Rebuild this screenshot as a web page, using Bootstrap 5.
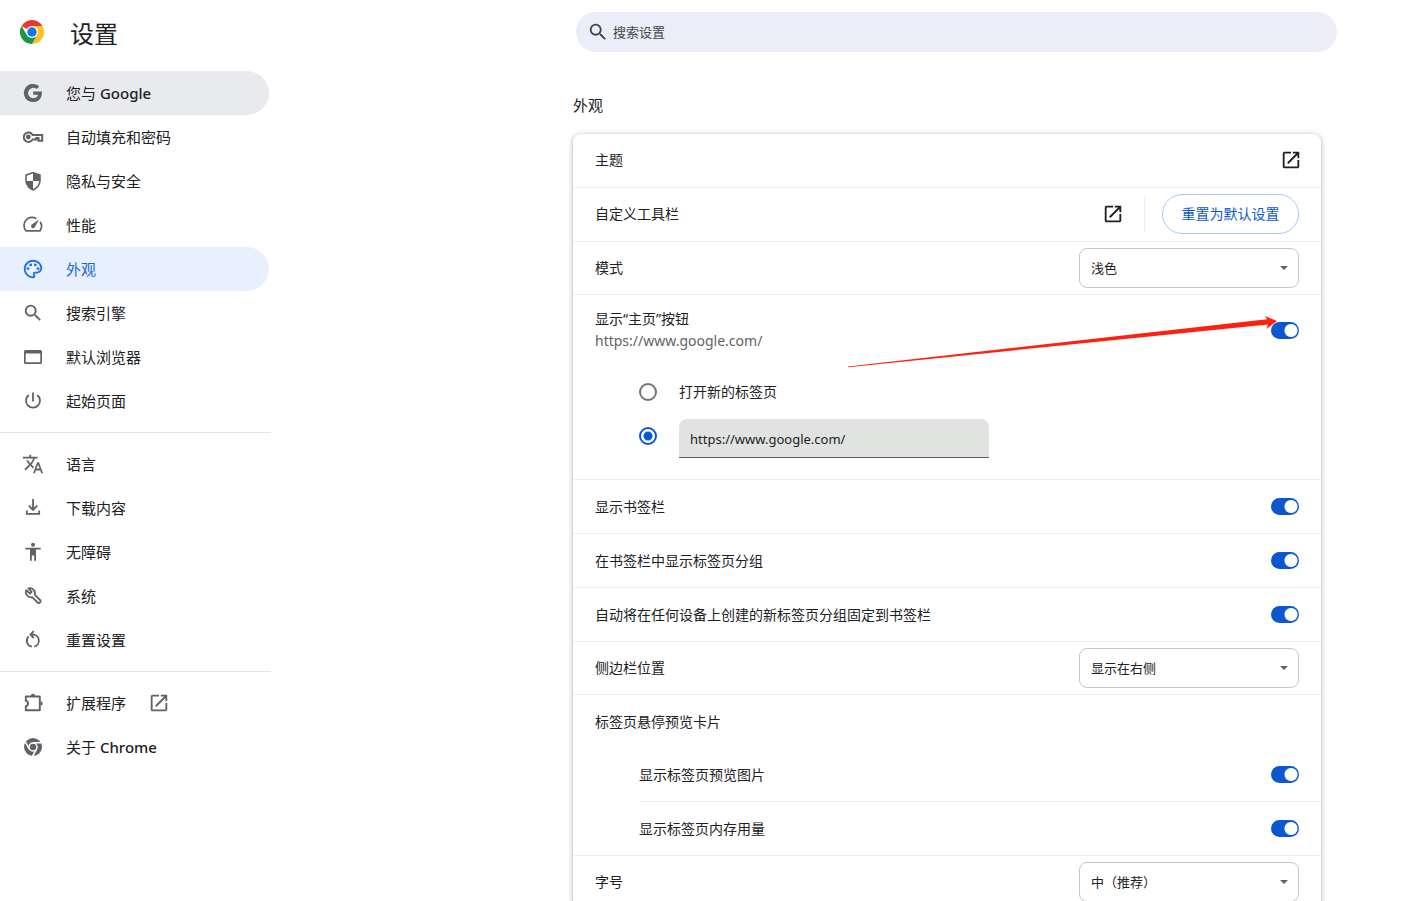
<!DOCTYPE html>
<html lang="zh-CN">
<head>
<meta charset="utf-8">
<meta name="viewport" content="width=device-width, initial-scale=1">
<title>设置 - 外观</title>
<link href="https://cdn.jsdelivr.net/npm/bootstrap@5.3.0/dist/css/bootstrap.min.css" rel="stylesheet">
<style>
:root{--ink:#202124;--muted:#5f6368;--blue:#0b57d0;--line:#ececec}
body{font-family:"Noto Sans","Noto Sans CJK SC",sans-serif;font-size:14px;line-height:20px;color:var(--ink);background:#fff}
.top-bar{height:64px}
.side{width:271px}
.app-title{font-size:24px;line-height:32px;font-weight:400;padding-top:4px}
.brand{padding-left:20px;gap:26px}
.searchbox{width:761px;height:40px;border-radius:20px;background:#ebeef8;margin-right:81px;padding:0 11px;gap:4px}
.searchbox .ico{color:#444746}
.searchbox input{font-size:13px;color:#444746;background:transparent;outline:0}
.searchbox input::placeholder{color:#444746;opacity:1}
.menu{padding-top:7px}
.menu .nav-link{height:44px;padding:0 22px;gap:22px;margin-right:2px;border-radius:0 22px 22px 0;color:var(--ink);font-size:15px;font-weight:400}
.menu .nav-link:hover,.menu .nav-link.hovered{background:#e8eaed}
.menu .nav-link.active{background:#e8f0fe;color:#1967d2}
.menu .nav-link.active svg{color:#1a73e8}
.menu svg{color:var(--muted)}
.menu hr{margin:9px 0;border-color:#e4e4e4;opacity:1}
.ico{width:22px;height:22px;flex:none;fill:currentColor}
.ico .ln{fill:none;stroke:currentColor;stroke-width:2}
.content{overflow-y:auto;scrollbar-width:none}
.panel-wrap{width:100%;max-width:748px;margin-left:auto;margin-right:97px}
.page-head{font-size:15px;line-height:24px;padding-top:29px;margin-bottom:17px;font-weight:400}
.panel{border-radius:8px;box-shadow:0 1px 2px rgba(60,64,67,.3),0 1px 4px 2px rgba(60,64,67,.18)}
.line{min-height:54px;padding:0 22px;border-top:1px solid var(--line)}
.line-action{padding-bottom:2px}
.line-pick{min-height:53px}
.line:first-child{border-top:0;min-height:53px}
.home-group{border-top:1px solid var(--line);padding-bottom:21px}
.home-group .line{border-top:0;min-height:75px;padding-bottom:5px;line-height:22px}
.sub-url{color:#5f6368}
.option{height:44px;padding-left:66px;gap:22px}
.sub-lines{margin-left:66px}
.sub-lines .line{padding-left:0}
.form-switch.sw{padding:0;margin:0;min-height:0;display:flex}
.sw .form-check-input,.sw .form-check-input:focus{width:28px;height:17px;margin:0;float:none;border:0;border-radius:9px;background:#bbb radial-gradient(circle at 8px center,#fff 6px,transparent 7px)}
.sw .form-check-input:checked{background:var(--blue) radial-gradient(circle at 20px center,#fff 6px,transparent 7px)}
.option .form-check-input{width:18px;height:18px;margin:0;border:2px solid #757575;background-image:none;background-color:#fff;box-shadow:none}
.option .form-check-input:checked{border-color:var(--blue);background:#fff radial-gradient(circle at center,var(--blue) 4px,#fff 5px) padding-box}
.url-input{width:310px;height:39px;border:0;border-bottom:1px solid #5f6368;border-radius:8px 8px 0 0;background:#e1e3e1;padding:1px 11px 0;font-size:13px;color:var(--ink);align-self:flex-end}
.pick{width:220px;height:40px;font-size:13px;color:var(--ink);border:1px solid #c4c7c5;border-radius:8px;padding:1px 30px 0 11px;background-image:url("data:image/svg+xml,%3Csvg xmlns='http://www.w3.org/2000/svg' viewBox='0 0 8 4'%3E%3Cpath d='M0 0h8L4 4z' fill='%235f6368'/%3E%3C/svg%3E");background-size:8px 4px;background-position:right 10px center}
.reset-btn{width:137px;height:40px;border:1px solid #a8c7fa;border-radius:20px;color:var(--blue);font-size:14px;padding:0}
.v-rule{width:1px;height:34px;background:var(--line);margin:0 17px 0 20px}
.open-btn{border:0;background:transparent;padding:0;display:flex;color:var(--ink)}
.open-btn.edge{margin-right:-3px}
.pointer-arrow{position:absolute;right:41px;top:19px;width:432px;height:54px;pointer-events:none}
</style>
</head>
<body>
<svg class="d-none" aria-hidden="true">
  <symbol id="i-open" viewBox="0 0 24 24"><path d="M19 19H5V5h7V3H5a2 2 0 0 0-2 2v14a2 2 0 0 0 2 2h14c1.100 0 2-.9 2-2v-7h-2v7zM14 3v2h3.590l-9.830 9.830 1.410 1.410L19 6.410V10h2V3h-7z"/></symbol>
  <symbol id="i-search" viewBox="0 0 24 24"><path d="M15.500 14h-.79l-.28-.27A6.471 6.471 0 0 0 16 9.500 6.500 6.500 0 1 0 9.500 16c1.610 0 3.090-.59 4.230-1.570l.27.28v.79l5 4.990L20.490 19l-4.990-5zm-6 0C7.010 14 5 11.990 5 9.500S7.010 5 9.500 5 14 7.010 14 9.500 11.990 14 9.500 14z"/></symbol>
</svg>
<div class="vh-100 overflow-hidden d-flex flex-column">
  <header class="top-bar d-flex align-items-center justify-content-between flex-shrink-0">
    <div class="brand side d-flex align-items-center flex-shrink-0">
      <svg width="24" height="24" viewBox="0 0 48 48" aria-hidden="true">
        <path fill="#e33b2e" d="M24 24 3.200 12A24 24 0 0 1 44.800 12z"/>
        <path fill="#fcc31e" d="M24 12h20.800A24 24 0 0 1 24 48l10.400-18z"/>
        <path fill="#1e9446" d="M3.200 12A24 24 0 0 0 24 48l10.400-18L24 24 13.600 30z"/>
        <circle cx="24" cy="24" r="12" fill="#fff"/><circle cx="24" cy="24" r="9.500" fill="#1a73e8"/>
      </svg>
      <h1 class="app-title mb-0">设置</h1>
    </div>
    <label class="searchbox d-flex align-items-center">
      <svg class="ico" aria-hidden="true"><use href="#i-search"/></svg>
      <input type="search" class="border-0 p-0 flex-grow-1" placeholder="搜索设置" aria-label="搜索设置">
    </label>
  </header>
  <div class="d-flex flex-grow-1 overflow-hidden">
    <nav class="side menu nav flex-column flex-nowrap flex-shrink-0" aria-label="设置">
      <a href="#" class="nav-link hovered d-flex align-items-center"><svg class="ico" viewBox="0 0 22 22"><path d="M19.900 9.400h-8.700v3.400h4.800c-.5 2-2.300 3.400-4.700 3.400a5.200 5.200 0 1 1 3.400-9.100l2.600-2.600A9.100 9.100 0 1 0 11.100 20.100c5.200 0 9.300-3.700 8.800-10.700z"/></svg><span>您与 <span class="fw-medium">Google</span></span></a>
      <a href="#" class="nav-link d-flex align-items-center"><svg class="ico" viewBox="0 0 22 22"><path class="ln" d="M10.600 9H20.200v5.700h-3.700v-2.700h-2.200v1.400h-3.700A4.700 4.700 0 1 1 10.600 9z"/><circle cx="6.300" cy="11" r="2.400"/></svg>自动填充和密码</a>
      <a href="#" class="nav-link d-flex align-items-center"><svg class="ico" viewBox="0 0 24 24"><path d="M12 2 3.500 5v6c0 5.300 3.600 10 8.500 11.500 4.900-1.500 8.500-6.200 8.500-11.500V5zm0 10h6.800c-.5 3.900-3.200 7.400-6.800 8.600V12H5.200V6.200L12 3.900z"/></svg>隐私与安全</a>
      <a href="#" class="nav-link d-flex align-items-center"><svg class="ico" viewBox="0 0 22 22"><path class="ln" style="stroke-width:1.700" d="M14.400 4.600A8.100 8.100 0 0 0 4 16.800h14a8.100 8.100 0 0 0 .2-9"/><path d="m17 5.500-4.400 8a2.100 2.100 0 0 1-3.200-2.700z"/></svg>性能</a>
      <a href="#" class="nav-link active d-flex align-items-center" aria-current="page"><svg class="ico" viewBox="0 0 24 24"><path d="M12 22C6.490 22 2 17.510 2 12S6.490 2 12 2s10 4.040 10 9c0 3.310-2.690 6-6 6h-1.770c-.28 0-.5.22-.5.5 0 .12.050.23.130.33.410.47.640 1.060.640 1.670A2.500 2.500 0 0 1 12 22zm0-18c-4.410 0-8 3.590-8 8s3.590 8 8 8c.28 0 .5-.22.5-.5a.54.540 0 0 0-.14-.35c-.41-.46-.63-1.050-.63-1.650a2.500 2.500 0 0 1 2.500-2.500H16c2.210 0 4-1.790 4-4 0-3.860-3.590-7-8-7z"/><circle cx="6.500" cy="11.500" r="1.500"/><circle cx="9.500" cy="7.500" r="1.500"/><circle cx="14.500" cy="7.500" r="1.500"/><circle cx="17.500" cy="11.500" r="1.500"/></svg>外观</a>
      <a href="#" class="nav-link d-flex align-items-center"><svg class="ico"><use href="#i-search"/></svg>搜索引擎</a>
      <a href="#" class="nav-link d-flex align-items-center"><svg class="ico" viewBox="0 0 22 22"><path fill-rule="evenodd" d="M3.500 4h15A1.500 1.500 0 0 1 20 5.500v11a1.500 1.500 0 0 1-1.500 1.500h-15A1.500 1.500 0 0 1 2 16.500v-11A1.500 1.500 0 0 1 3.500 4zm.2 3.500v8.800h14.600V7.500z"/></svg>默认浏览器</a>
      <a href="#" class="nav-link d-flex align-items-center"><svg class="ico" viewBox="0 0 22 22"><path class="ln" style="stroke-width:1.800" d="M11 2.500v9M6.800 5a7 7 0 1 0 8.400 0"/></svg>起始页面</a>
      <hr>
      <a href="#" class="nav-link d-flex align-items-center"><svg class="ico" viewBox="0 0 24 24"><path d="m12.870 15.070-2.540-2.510.03-.03A17.520 17.520 0 0 0 14.070 6H17V4h-7V2H8v2H1v1.990h11.170C11.500 7.920 10.440 9.750 9 11.350 8.070 10.320 7.300 9.190 6.690 8h-2c.73 1.630 1.730 3.170 2.980 4.560l-5.090 5.020L4 19l5-5 3.110 3.110.76-2.040zM18.500 10h-2L12 22h2l1.120-3h4.750L21 22h2l-4.500-12zm-2.620 7 1.620-4.330L19.120 17h-3.240z"/></svg>语言</a>
      <a href="#" class="nav-link d-flex align-items-center"><svg class="ico" viewBox="0 0 22 22"><path class="ln" style="stroke-width:1.800" d="M11 2v10.500M6.800 8.700l4.200 4.200 4.200-4.200M4.800 13.500v3.300h12.400v-3.300"/></svg>下载内容</a>
      <a href="#" class="nav-link d-flex align-items-center"><svg class="ico" viewBox="0 0 22 22"><circle cx="11" cy="3.800" r="2"/><path d="M3.300 6.800h15.400v1.800H14v11.200h-1.800v-5.300H9.800v5.300H8V8.600H3.300z"/></svg>无障碍</a>
      <a href="#" class="nav-link d-flex align-items-center"><svg class="ico" viewBox="0 0 22 22"><path class="ln" style="stroke-width:1.800;stroke-linejoin:round" d="m4.400 5.200 3.500 3.500 1.900-1.900-3.400-3.400a5 5 0 0 1 6.300 6.300l5.300 5.300a1.600 1.600 0 0 1-2.400 2.500l-5.400-5.400A5 5 0 0 1 4.400 5.200z"/></svg>系统</a>
      <a href="#" class="nav-link d-flex align-items-center"><svg class="ico" viewBox="0 0 22 22"><path class="ln" style="stroke-width:1.800" d="M6.600 7.400a6 6 0 0 0 3.200 10.200M9 5.600h2a6.100 6.100 0 0 1 1.300 12M11.800 2.200 8.400 5.600l3.400 3.400"/></svg>重置设置</a>
      <hr>
      <a href="#" class="nav-link d-flex align-items-center"><svg class="ico" viewBox="0 0 22 22"><path class="ln" style="stroke-width:1.900;stroke-linejoin:round" d="M3.800 4.500h14v13.800h-14v-4.100c3-.6 3-4.800 0-5.400z"/><path d="M8.800 4a2.200 2.200 0 0 1 4.400 0zM18.500 9.200a2.200 2.200 0 0 1 0 4.400z"/></svg>扩展程序<svg class="ico"><use href="#i-open"/></svg></a>
      <a href="#" class="nav-link d-flex align-items-center"><svg class="ico" viewBox="0 0 22 22"><circle cx="11" cy="11" r="9"/><circle cx="11" cy="11" r="4" fill="none" stroke="#fff" stroke-width="1.500"/><path d="M11 6.800h8M7.400 13.100 3.400 6.200M14.600 13.100l-4 6.900" fill="none" stroke="#fff" stroke-width="1.500"/></svg><span>关于 <span class="fw-medium">Chrome</span></span></a>
    </nav>
    <main class="content flex-grow-1 d-flex">
      <div class="panel-wrap">
        <h2 class="page-head">外观</h2>
        <section class="panel bg-white">
          <div class="line line-action d-flex align-items-center justify-content-between"><span>主题</span>
            <button class="open-btn edge" aria-label="主题"><svg class="ico"><use href="#i-open"/></svg></button></div>
          <div class="line line-action d-flex align-items-center"><span class="me-auto">自定义工具栏</span>
            <button class="open-btn" aria-label="自定义工具栏"><svg class="ico"><use href="#i-open"/></svg></button>
            <span class="v-rule"></span>
            <button class="btn reset-btn">重置为默认设置</button></div>
          <div class="line line-pick d-flex align-items-center justify-content-between"><label for="mode">模式</label>
            <select id="mode" class="form-select pick"><option>浅色</option></select></div>
          <div class="home-group position-relative">
            <div class="line d-flex align-items-center justify-content-between">
              <label for="home"><span class="d-block">显示“主页”按钮</span><span class="sub-url d-block">https://www.google.com/</span></label>
              <div class="form-check form-switch sw"><input id="home" class="form-check-input" type="checkbox" role="switch" checked></div>
            </div>
            <div class="option d-flex align-items-center"><input class="form-check-input" type="radio" name="homepage" id="newtab"><label for="newtab">打开新的标签页</label></div>
            <div class="option d-flex align-items-center"><input class="form-check-input" type="radio" name="homepage" aria-label="自定义网址" checked><input class="url-input" type="text" value="https://www.google.com/" aria-label="网址"></div>
            <svg class="pointer-arrow" viewBox="0 0 432 54" aria-hidden="true"><path fill="#ff2010" d="M0 52.500 419 5.300 417 2l12 5-10.500 8 1.500-4.500L0 53.200z"/></svg>
          </div>
          <div class="line d-flex align-items-center justify-content-between"><label for="bar">显示书签栏</label>
            <div class="form-check form-switch sw"><input id="bar" class="form-check-input" type="checkbox" role="switch" checked></div></div>
          <div class="line d-flex align-items-center justify-content-between"><label for="groups">在书签栏中显示标签页分组</label>
            <div class="form-check form-switch sw"><input id="groups" class="form-check-input" type="checkbox" role="switch" checked></div></div>
          <div class="line d-flex align-items-center justify-content-between"><label for="pin">自动将在任何设备上创建的新标签页分组固定到书签栏</label>
            <div class="form-check form-switch sw"><input id="pin" class="form-check-input" type="checkbox" role="switch" checked></div></div>
          <div class="line line-pick d-flex align-items-center justify-content-between"><label for="sidepos">侧边栏位置</label>
            <select id="sidepos" class="form-select pick"><option>显示在右侧</option></select></div>
          <div class="line d-flex align-items-center">标签页悬停预览卡片</div>
          <div class="sub-lines">
            <div class="line d-flex align-items-center justify-content-between"><label for="thumb">显示标签页预览图片</label>
              <div class="form-check form-switch sw"><input id="thumb" class="form-check-input" type="checkbox" role="switch" checked></div></div>
            <div class="line d-flex align-items-center justify-content-between"><label for="mem">显示标签页内存用量</label>
              <div class="form-check form-switch sw"><input id="mem" class="form-check-input" type="checkbox" role="switch" checked></div></div>
          </div>
          <div class="line line-pick d-flex align-items-center justify-content-between"><label for="size">字号</label>
            <select id="size" class="form-select pick"><option>中（推荐）</option></select></div>
        </section>
      </div>
    </main>
  </div>
</div>
<script src="https://cdn.jsdelivr.net/npm/bootstrap@5.3.0/dist/js/bootstrap.bundle.min.js"></script>
</body>
</html>
